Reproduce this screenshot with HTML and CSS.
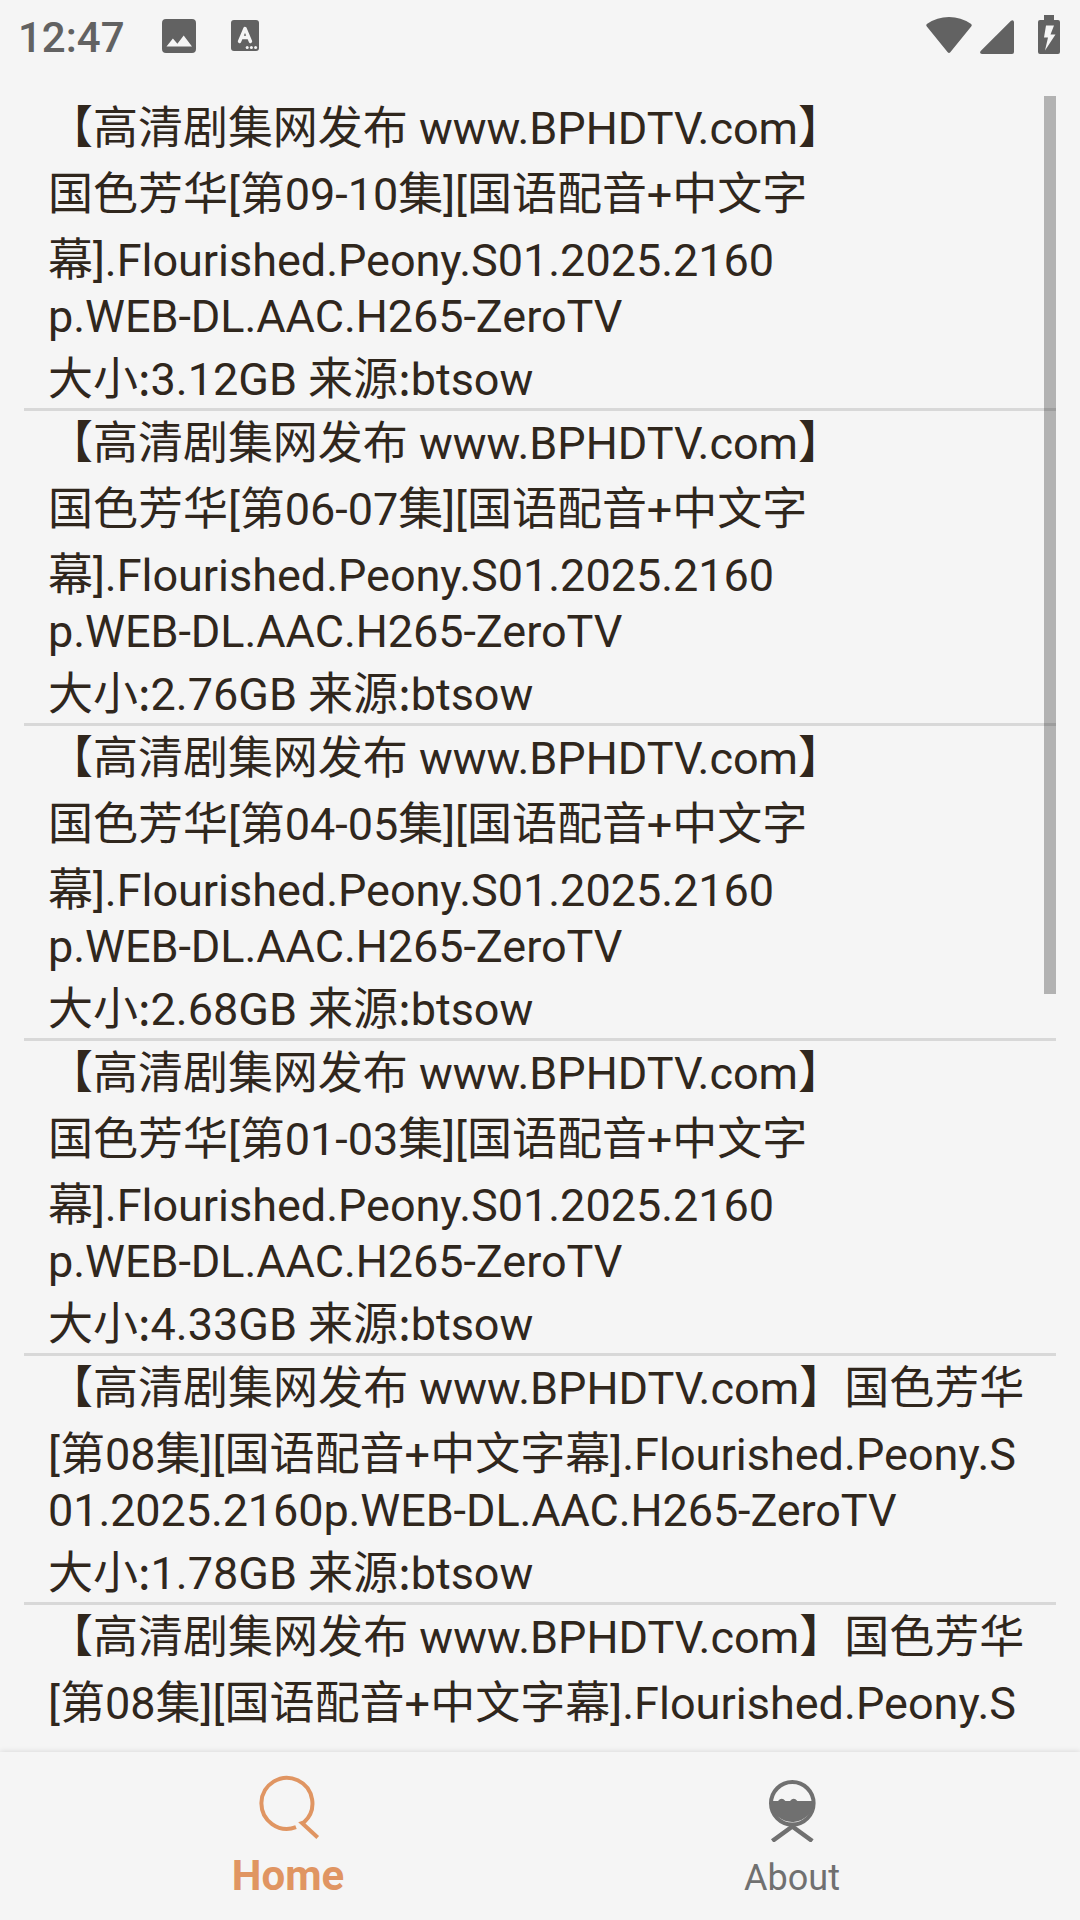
FILE: index.html
```html
<!DOCTYPE html>
<html lang="zh-CN">
<head>
    <meta charset="UTF-8">
    <meta name="viewport" content="width=device-width, initial-scale=1.0">
    <title>Search Results</title>
    <link rel="stylesheet" href="styles.css">
</head>
<body>
    <header class="status-bar">
        <div class="status-left">
            <span class="clock">12:47</span>
            <svg class="icon-image" width="34" height="34" viewBox="0 0 34 34">
                <path fill-rule="evenodd" d="M4 0h26a4 4 0 0 1 4 4v26a4 4 0 0 1-4 4H4a4 4 0 0 1-4-4V4a4 4 0 0 1 4-4zM4.500 27.500h25.500l-8.300-11-6.300 8.300-4.500-5.300z"/>
            </svg>
            <svg class="icon-lang" width="28" height="31" viewBox="0 0 28 31">
                <rect width="28" height="31" rx="3"/>
                <path class="stroke" d="M8.500 21.500L14 8.500l5.500 13M10.500 17.500h7"/>
                <circle class="dot" cx="16.200" cy="27.500" r="1.500"/>
                <circle class="dot" cx="20.400" cy="27.500" r="1.500"/>
                <circle class="dot" cx="24.600" cy="27.500" r="1.500"/>
            </svg>
        </div>
        <div class="status-right">
            <svg width="46" height="37" viewBox="0 0 46 37">
                <path d="M.8 9.500Q-.5 8 1.200 6.800Q11 0 23 0t21.800 6.800Q46.500 8 45.200 9.500L24.300 35.300q-1.300 1.400-2.600 0z"/>
            </svg>
            <svg class="icon-signal" width="34" height="34" viewBox="0 0 34 34">
                <path d="M34 2v30a2 2 0 0 1-2 2H2Q-1 33.500.7 31L31 .7Q33.500-.8 34 2z"/>
            </svg>
            <svg class="icon-battery" width="22" height="39" viewBox="0 0 22 39">
                <path fill-rule="evenodd" d="M6 0h10v5h4a2 2 0 0 1 2 2v30a2 2 0 0 1-2 2H2a2 2 0 0 1-2-2V7a2 2 0 0 1 2-2h4zM8 10.500L6 22.500h4L7 35.500l10.500-16h-5l3.500-9z"/>
            </svg>
        </div>
    </header>

    <main class="results">
        <article class="item">
            <h2 class="title">
                <span class="line">【高清剧集网发布 www.BPHDTV.com】</span>
                <span class="line">国色芳华[第09-10集][国语配音+中文字</span>
                <span class="line">幕].Flourished.Peony.S01.2025.2160</span>
                <span class="line latin">p.WEB-DL.AAC.H265-ZeroTV</span>
            </h2>
            <p class="meta">大小<span class="colon">:</span>3.12GB 来源<span class="colon">:</span>btsow</p>
        </article>
        <article class="item">
            <h2 class="title">
                <span class="line">【高清剧集网发布 www.BPHDTV.com】</span>
                <span class="line">国色芳华[第06-07集][国语配音+中文字</span>
                <span class="line">幕].Flourished.Peony.S01.2025.2160</span>
                <span class="line latin">p.WEB-DL.AAC.H265-ZeroTV</span>
            </h2>
            <p class="meta">大小<span class="colon">:</span>2.76GB 来源<span class="colon">:</span>btsow</p>
        </article>
        <article class="item">
            <h2 class="title">
                <span class="line">【高清剧集网发布 www.BPHDTV.com】</span>
                <span class="line">国色芳华[第04-05集][国语配音+中文字</span>
                <span class="line">幕].Flourished.Peony.S01.2025.2160</span>
                <span class="line latin">p.WEB-DL.AAC.H265-ZeroTV</span>
            </h2>
            <p class="meta">大小<span class="colon">:</span>2.68GB 来源<span class="colon">:</span>btsow</p>
        </article>
        <article class="item">
            <h2 class="title">
                <span class="line">【高清剧集网发布 www.BPHDTV.com】</span>
                <span class="line">国色芳华[第01-03集][国语配音+中文字</span>
                <span class="line">幕].Flourished.Peony.S01.2025.2160</span>
                <span class="line latin">p.WEB-DL.AAC.H265-ZeroTV</span>
            </h2>
            <p class="meta">大小<span class="colon">:</span>4.33GB 来源<span class="colon">:</span>btsow</p>
        </article>
        <article class="item wide">
            <h2 class="title">
                <span class="line">【高清剧集网发布 www.BPHDTV.com】国色芳华</span>
                <span class="line">[第08集][国语配音+中文字幕].Flourished.Peony.S</span>
                <span class="line latin">01.2025.2160p.WEB-DL.AAC.H265-ZeroTV</span>
            </h2>
            <p class="meta">大小<span class="colon">:</span>1.78GB 来源<span class="colon">:</span>btsow</p>
        </article>
        <article class="item wide">
            <h2 class="title">
                <span class="line">【高清剧集网发布 www.BPHDTV.com】国色芳华</span>
                <span class="line">[第08集][国语配音+中文字幕].Flourished.Peony.S</span>
            </h2>
        </article>
        <div class="scroll-thumb"></div>
    </main>

    <nav class="tabs">
        <a class="tab active">
            <svg width="64" height="68" viewBox="0 0 64 68">
                <path d="M40 53.200A25.500 25.500 0 1 1 48 48.300L46 49L61.700 63.500"/>
            </svg>
            <span>Home</span>
        </a>
        <a class="tab">
            <svg width="64" height="68" viewBox="0 0 64 68">
                <circle cx="32.300" cy="29.300" r="21.300"/>
                <path class="fill" d="M10.500 27h7.500q3.700-4.500 7.400 0h4.600q3.700-4.500 7.400 0h16.700a22 22 0 0 1-43.600 3z"/>
                <path class="legs" d="M12.300 67L32.300 52.500l20 14.500"/>
            </svg>
            <span>About</span>
        </a>
    </nav>
</body>
</html>
```
FILE: styles.css
```css
:root {
    --background: #f5f5f5;
    --text: #30271d;
    --status: #626262;
    --divider: #d8d8d8;
    --accent: #e09562;
    --muted: #707070;
}

* {
    margin: 0;
    padding: 0;
    box-sizing: border-box;
}

body {
    height: 1920px;
    display: flex;
    flex-direction: column;
    overflow: hidden;
    background: var(--background);
    color: var(--text);
    font-family: Roboto, "Noto Sans CJK SC", sans-serif;
}

/* Status bar */
.status-bar {
    height: 96px;
    flex: none;
    display: flex;
    justify-content: space-between;
    padding: 0 20px 0 18px;
    color: var(--status);
}

.status-bar svg {
    display: block;
    fill: currentColor;
}

.status-left,
.status-right {
    display: flex;
    align-items: flex-start;
}

.clock {
    width: 144px;
    padding-top: 14px;
    font-size: 42px;
    font-weight: 500;
    line-height: 48px;
}

.icon-image {
    margin-top: 19px;
}

.icon-lang {
    margin: 20px 0 0 35px;
}

.icon-lang .stroke {
    fill: none;
    stroke: var(--background);
    stroke-width: 3.4;
    stroke-linecap: round;
    stroke-linejoin: round;
}

.icon-lang .dot {
    fill: var(--background);
}

.status-right {
    padding-top: 17px;
}

.icon-signal {
    margin: 3px 24px 0 8px;
}

.icon-battery {
    margin-top: -2px;
}

/* Result list */
.results {
    position: relative;
    height: 1656px;
    flex: none;
    padding: 0 24px;
    overflow: hidden;
}

.item {
    padding: 0 24px;
    border-bottom: 3px solid var(--divider);
    font-size: 45px;
    white-space: nowrap;
}

.title {
    padding-bottom: 12px;
    font-size: inherit;
    font-weight: 400;
}

.line {
    display: block;
    line-height: 66px;
    letter-spacing: -0.03px;
}

.line.latin {
    line-height: 46px;
    letter-spacing: -0.05px;
}

.wide .line {
    letter-spacing: 0.02px;
}

.wide .line.latin {
    letter-spacing: -0.1px;
}

.meta {
    height: 56px;
    line-height: 56px;
}

/* line-height 0 keeps the CJK metrics from moving the baseline */
.colon {
    font-family: "Noto Sans CJK SC", sans-serif;
    line-height: 0;
}

.item:last-of-type {
    border-bottom: none;
}

.scroll-thumb {
    position: absolute;
    top: 0;
    right: 24px;
    width: 12px;
    height: 898px;
    background: rgba(0, 0, 0, 0.27);
}

/* Bottom tabs */
.tabs {
    position: relative;
    flex: 1;
    display: flex;
    padding: 0 36px;
    background: var(--background);
    box-shadow: 0 0 6px rgba(0, 0, 0, 0.14);
}

.tab {
    flex: 1;
    display: flex;
    flex-direction: column;
    align-items: center;
    padding-top: 22px;
    color: var(--muted);
    font-size: 36px;
    line-height: 48px;
}

.tab svg {
    display: block;
    margin-bottom: 12px;
    fill: none;
    stroke: currentColor;
    stroke-width: 4;
}

.tab svg .fill {
    fill: currentColor;
    stroke: none;
}

.tab svg .legs {
    stroke-width: 4.5;
}

.tab.active {
    color: var(--accent);
    font-size: 42px;
    font-weight: 700;
}

.tab.active svg {
    margin-bottom: 10px;
}
```
